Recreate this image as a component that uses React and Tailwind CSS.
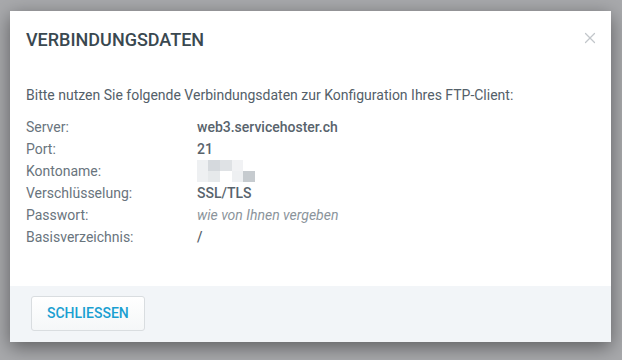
import { X } from 'lucide-react'

const rows = [
  { label: 'Server:', value: 'web3.servicehoster.ch', kind: 'bold' },
  { label: 'Port:', value: '21', kind: 'bold' },
  { label: 'Kontoname:', value: null, kind: 'blur' },
  { label: 'Verschlüsselung:', value: 'SSL/TLS', kind: 'bold' },
  { label: 'Passwort:', value: 'wie von Ihnen vergeben', kind: 'italic' },
  { label: 'Basisverzeichnis:', value: '/', kind: 'bold' },
]

function Blurred() {
  return (
    <div className="flex h-[22px] items-center">
      <div className="grid grid-cols-[11px_12px_12px_11px_12px] grid-rows-[11px_11px]">
        <span className="bg-[#eef0f2]" />
        <span className="bg-[#d5d9dd]" />
        <span className="bg-[#dfe2e5]" />
        <span className="bg-[#f1f2f4]" />
        <span />
        <span className="bg-[#eef0f2]" />
        <span className="bg-[#e6e9eb]" />
        <span />
        <span className="bg-[#eef0f2]" />
        <span className="bg-[#c6cbcf]" />
      </div>
    </div>
  )
}

export default function App() {
  return (
    <div className="min-h-screen bg-[#a8a9ac] px-[10px] pt-[11px] font-['Roboto',sans-serif]">
      <div className="w-[601px] bg-white shadow-[0_5px_18px_rgba(0,0,0,0.45)]">
        <div className="flex items-center justify-between pl-[16px] pr-[12px] pt-[17px]">
          <h2 className="text-[18px] leading-[24px] font-medium uppercase text-[#3a4850]">Verbindungsdaten</h2>
          <X size={18} strokeWidth={1.6} className="-mt-[4px] text-[#c2c6ca]" />
        </div>
        <div className="pb-[38px] pl-[16px] pr-[16px] pt-[33px] text-[14px] text-[#546069]">
          <p className="leading-[20px]">Bitte nutzen Sie folgende Verbindungsdaten zur Konfiguration Ihres FTP-Client:</p>
          <div className="mt-[11px]">
            {rows.map((r) => (
              <div key={r.label} className="flex h-[22px] items-center">
                <span className="w-[171px] shrink-0 text-[#69747d]">{r.label}</span>
                {r.kind === 'blur' ? (
                  <Blurred />
                ) : r.kind === 'italic' ? (
                  <span className="italic text-[#8b949b]">{r.value}</span>
                ) : (
                  <span className="font-medium text-[#58636c]">{r.value}</span>
                )}
              </div>
            ))}
          </div>
        </div>
        <div className="bg-[#f2f5f8] px-[21px] pb-[11px] pt-[10px]">
          <button
            type="button"
            className="h-[35px] rounded-[3px] border border-[#d9dde0] bg-gradient-to-b from-white to-[#f5f7f8] px-[15px] text-[14px] font-medium uppercase text-[#1a9fd1]"
          >
            Schliessen
          </button>
        </div>
      </div>
    </div>
  )
}
